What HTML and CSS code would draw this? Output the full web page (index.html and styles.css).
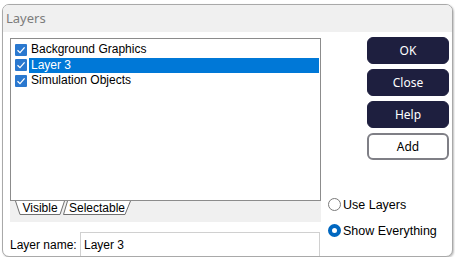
FILE: index.html
```html
<!DOCTYPE html>
<html lang="en">
<head>
  <meta charset="UTF-8">
  <meta name="viewport" content="width=device-width, initial-scale=1.0">
  <title>Layers</title>
  <link rel="stylesheet" href="styles.css">
</head>
<body>
  <div class="window">
    <div class="titlebar">Layers</div>
    <div class="content">
      <div class="left">
        <div class="listbox">
          <div class="row">
            <svg class="check" width="12" height="12" viewBox="0 0 12 12"><rect width="12" height="12" rx="1" fill="#2a78cf"/><polyline points="2.5,6.2 5,8.6 9.6,3.4" fill="none" stroke="#fff" stroke-width="1.3"/></svg>
            <span class="item">Background Graphics</span>
          </div>
          <div class="row">
            <svg class="check" width="12" height="12" viewBox="0 0 12 12"><rect width="12" height="12" rx="1" fill="#2a78cf"/><polyline points="2.5,6.2 5,8.6 9.6,3.4" fill="none" stroke="#fff" stroke-width="1.3"/></svg>
            <span class="item selected">Layer 3</span>
          </div>
          <div class="row">
            <svg class="check" width="12" height="12" viewBox="0 0 12 12"><rect width="12" height="12" rx="1" fill="#2a78cf"/><polyline points="2.5,6.2 5,8.6 9.6,3.4" fill="none" stroke="#fff" stroke-width="1.3"/></svg>
            <span class="item">Simulation Objects</span>
          </div>
        </div>
        <div class="tabstrip">
          <span class="tab tab-visible">
            <svg class="tab-shape" width="50" height="15" viewBox="0 0 50 15"><polyline points="0.5,0 5,13.5 45,13.5 49.5,0" fill="#fff" stroke="#707070"/></svg>
            <span class="tab-label">Visible</span>
          </span>
          <span class="tab tab-select">
            <svg class="tab-shape" width="68" height="15" viewBox="0 0 68 15"><polyline points="4.5,0 0.5,13.5 62,13.5 67.5,0" fill="#fff" stroke="#707070"/></svg>
            <span class="tab-label">Selectable</span>
          </span>
        </div>
        <div class="name-row">
          <label for="layerName">Layer name:</label>
          <input id="layerName" class="name-input" type="text" value="Layer 3">
        </div>
      </div>
      <div class="right">
        <div class="buttons">
          <button class="btn dark">OK</button>
          <button class="btn dark">Close</button>
          <button class="btn dark">Help</button>
          <button class="btn light">Add</button>
        </div>
        <div class="radios">
          <div class="radio-row"><span class="radio"></span>Use Layers</div>
          <div class="radio-row"><span class="radio on"></span>Show Everything</div>
        </div>
      </div>
    </div>
  </div>
</body>
</html>
```

FILE: styles.css
```css
body {
  margin: 0;
  background: #fff;
  font-family: "Liberation Sans", Arial, sans-serif;
  font-size: 12px;
  color: #000;
}
.window {
  margin: 4px 0 0 2px;
  width: 449px;
  height: 251px;
  border: 1px solid #a9a9a9;
  border-radius: 7px;
  overflow: hidden;
  background: #fff;
  box-shadow: 1px 1px 2px rgba(0, 0, 0, 0.25);
}
.titlebar {
  height: 27px;
  background: #f0f0f0;
  padding-left: 3px;
  font-family: "Noto Sans", sans-serif;
  font-size: 13px;
  line-height: 26px;
  color: #7c7c7c;
}
.content {
  display: flex;
  height: 224px;
}
.left {
  margin-left: 7px;
  width: 311px;
  padding-top: 6px;
}
.listbox {
  height: 158px;
  border: 1px solid #8c8c8c;
  padding-top: 3px;
}
.row {
  display: flex;
  align-items: center;
  height: 15.5px;
  padding-left: 4px;
}
.check {
  flex: none;
}
.item {
  flex: 1;
  margin-left: 2px;
  margin-right: 1px;
  padding-left: 2px;
  height: 15px;
  line-height: 15px;
}
.selected {
  background: #0078d7;
  color: #fff;
}
.tabstrip {
  height: 21px;
  background: #f0f0f0;
  display: flex;
  padding-left: 5px;
}
.tab {
  position: relative;
  height: 15px;
}
.tab-visible {
  width: 50px;
  z-index: 2;
}
.tab-select {
  width: 68px;
  margin-left: -2px;
}
.tab-shape {
  position: absolute;
  left: 0;
  top: 0;
}
.tab-label {
  position: relative;
  display: block;
  line-height: 14px;
  text-align: center;
}
.name-row {
  display: flex;
  align-items: center;
  margin-top: 10px;
}
.name-row label {
  width: 70px;
}
.name-input {
  width: 240px;
  height: 25px;
  box-sizing: border-box;
  border: 1px solid #d0d0d0;
  padding: 0 3px;
  font-family: "Liberation Sans", Arial, sans-serif;
  font-size: 12px;
  outline: none;
}
.right {
  flex: 1;
  display: flex;
  flex-direction: column;
  justify-content: space-between;
}
.buttons {
  display: flex;
  flex-direction: column;
  gap: 5px;
  margin: 5px 0 0 46px;
}
.btn {
  width: 82px;
  height: 27px;
  border-radius: 6px;
  font-family: "Noto Sans", sans-serif;
  font-size: 12px;
  padding: 0;
}
.dark {
  background: #1e1f3f;
  border: 1px solid #1e1f3f;
  color: #fff;
}
.light {
  background: #fff;
  border: 2px solid #7f7f86;
  color: #000;
}
.radios {
  margin: 0 0 19px 7px;
  display: flex;
  flex-direction: column;
  gap: 13px;
}
.radio-row {
  display: flex;
  align-items: center;
  height: 13px;
  font-size: 12.5px;
}
.radio {
  width: 11px;
  height: 11px;
  border: 1px solid #7a7a7a;
  border-radius: 50%;
  margin-right: 2px;
  background: #fff;
}
.radio.on {
  width: 5px;
  height: 5px;
  border: 4px solid #0067c0;
}
```
